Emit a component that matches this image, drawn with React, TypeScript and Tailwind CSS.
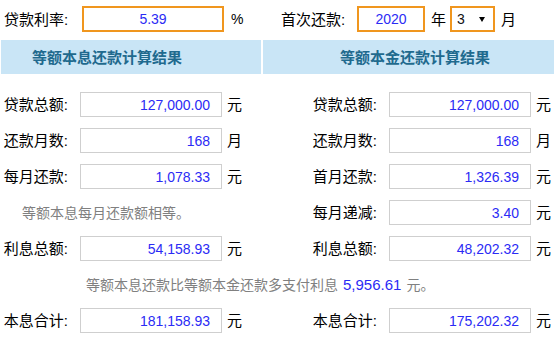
const FONT = { fontFamily: '"Liberation Sans", "Noto Sans CJK SC", sans-serif' }

interface Row {
  label: string
  value: string
  unit: string
}

const LEFT: (Row | null)[] = [
  { label: '贷款总额', value: '127,000.00', unit: '元' },
  { label: '还款月数', value: '168', unit: '月' },
  { label: '每月还款', value: '1,078.33', unit: '元' },
  null,
  { label: '利息总额', value: '54,158.93', unit: '元' },
]

const RIGHT: Row[] = [
  { label: '贷款总额', value: '127,000.00', unit: '元' },
  { label: '还款月数', value: '168', unit: '月' },
  { label: '首月还款', value: '1,326.39', unit: '元' },
  { label: '每月递减', value: '3.40', unit: '元' },
  { label: '利息总额', value: '48,202.32', unit: '元' },
]

function ValueBox({ value }: { value: string }) {
  return (
    <div className="w-[142px] h-[25px] border border-[#cfcfcf] bg-white flex items-center justify-end pr-[11px] text-[14px] leading-none text-[#2b2bf5]">
      {value}
    </div>
  )
}

function LeftCell({ row }: { row: Row }) {
  return (
    <div className="w-[277px] flex items-center">
      <span className="w-[80px] pr-[12px] text-right text-[15px] leading-none text-black">{row.label}:</span>
      <ValueBox value={row.value} />
      <span className="ml-[5px] text-[15px] leading-none text-black">{row.unit}</span>
    </div>
  )
}

function RightCell({ row }: { row: Row }) {
  return (
    <div className="w-[277px] flex items-center">
      <span className="w-[112px] pr-[12px] text-right text-[15px] leading-none text-black">{row.label}:</span>
      <ValueBox value={row.value} />
      <span className="ml-[5px] text-[15px] leading-none text-black">{row.unit}</span>
    </div>
  )
}

export default function App() {
  return (
    <div className="w-[554px] h-[338px] overflow-hidden bg-white" style={FONT}>
      {/* Rate and first payment */}
      <div className="flex items-center h-[26px] mt-[6px]">
        <div className="w-[277px] flex items-center">
          <span className="w-[82px] pl-[4px] text-[15px] leading-none text-black">贷款利率:</span>
          <div className="w-[142px] h-[26px] border-2 border-[#f0961e] flex items-center justify-center text-[14px] leading-none text-[#2b2bf5]">
            5.39
          </div>
          <span className="ml-[7px] text-[14px] leading-none text-black">%</span>
        </div>
        <div className="w-[277px] flex items-center">
          <span className="w-[80px] pl-[4px] text-[15px] leading-none text-black">首次还款:</span>
          <div className="w-[68px] h-[26px] border-2 border-[#f0961e] flex items-center justify-center text-[14px] leading-none text-[#2b2bf5]">
            2020
          </div>
          <span className="ml-[6px] text-[15px] leading-none text-black">年</span>
          <div className="ml-[4px] w-[45px] h-[26px] border-2 border-[#f0961e] flex items-center justify-between pl-[5px] pr-[8px] text-[14px] leading-none text-[#111]">
            <span>3</span>
            <svg width="6" height="5" viewBox="0 0 6 5">
              <path d="M0 0H6L3 5Z" fill="#000" />
            </svg>
          </div>
          <span className="ml-[6px] text-[15px] leading-none text-black">月</span>
        </div>
      </div>

      {/* Result headers */}
      <div className="flex h-[34px] mt-[8px] gap-[2px]">
        <div className="ml-[1px] w-[260px] bg-[#c9e5f6] flex items-center pl-[31px] text-[15px] font-bold leading-none text-[#1f6a8e]">
          等额本息还款计算结果
        </div>
        <div className="flex-1 bg-[#c9e5f6] flex items-center pl-[77px] text-[15px] font-bold leading-none text-[#1f6a8e]">
          等额本金还款计算结果
        </div>
      </div>

      {/* Results */}
      <div className="mt-[18px] flex flex-col gap-[11px]">
        {RIGHT.map((r, i) => {
          const l = LEFT[i]
          return (
            <div key={r.label} className="flex h-[25px]">
              {l ? (
                <LeftCell row={l} />
              ) : (
                <div className="w-[277px] flex items-center pl-[22px] text-[14px] leading-none text-[#808080]">
                  等额本息每月还款额相等。
                </div>
              )}
              <RightCell row={r} />
            </div>
          )
        })}
        <div className="flex items-center h-[25px] pl-[86px] text-[14px] leading-none text-[#808080]">
          等额本息还款比等额本金还款多支付利息
          <span className="mx-[5px] text-[15px] text-[#2b2bf5]">5,956.61</span>
          元。
        </div>
        <div className="flex h-[25px]">
          <LeftCell row={{ label: '本息合计', value: '181,158.93', unit: '元' }} />
          <RightCell row={{ label: '本息合计', value: '175,202.32', unit: '元' }} />
        </div>
      </div>
    </div>
  )
}
